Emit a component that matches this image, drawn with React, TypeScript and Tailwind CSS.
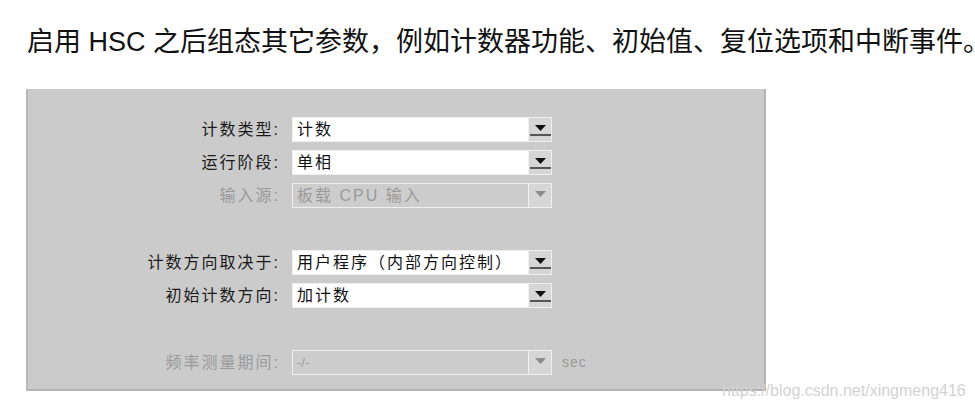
const FONT = "font-['Liberation_Sans','Noto_Sans_CJK_SC',sans-serif]";

type Row = {
  label: string;
  value: string;
  disabled?: boolean;
  unit?: string;
};

const groups: Row[][] = [
  [
    { label: "计数类型:", value: "计数" },
    { label: "运行阶段:", value: "单相" },
    { label: "输入源:", value: "板载 CPU 输入", disabled: true },
  ],
  [
    { label: "计数方向取决于:", value: "用户程序（内部方向控制）" },
    { label: "初始计数方向:", value: "加计数" },
  ],
  [{ label: "频率测量期间:", value: "-/-", disabled: true, unit: "sec" }],
];

function Arrow({ disabled }: { disabled?: boolean }) {
  return (
    <div className="flex h-full w-[23px] shrink-0 flex-col items-center justify-center border-l border-[#f2f2f2] bg-[#d6d6d6]">
      <svg width="11" height="6" viewBox="0 0 11 6" className="mt-[2px]">
        <polygon points="0,0 11,0 5.5,6" fill={disabled ? "#8c8c8c" : "#111"} />
      </svg>
      <div className={`mt-[3px] h-[2px] w-[21px] ${disabled ? "" : "bg-[#555]"}`} />
    </div>
  );
}

function Field({ row }: { row: Row }) {
  return (
    <div className="flex h-[25px] items-center">
      <div className={`w-[264px] pr-[12px] text-right text-[16px] tracking-[2px] ${row.disabled ? "text-[#9a9a9a]" : "text-[#1a1a1a]"}`}>
        {row.label}
      </div>
      <div
        className={`flex h-[25px] w-[260px] items-stretch border border-[#efefef] ${row.disabled ? "bg-[#cdcdcd]" : "bg-white"}`}
      >
        <div
          className={`flex flex-1 items-center overflow-hidden whitespace-nowrap pl-[4px] ${
            row.disabled ? "text-[#9a9a9a]" : "text-[#111]"
          } ${row.value === "-/-" ? "text-[13px]" : "text-[16px] tracking-[2px]"}`}
        >
          {row.value}
        </div>
        <Arrow disabled={row.disabled} />
      </div>
      {row.unit && <div className="ml-[10px] text-[14px] tracking-[1px] text-[#9a9a9a]">{row.unit}</div>}
    </div>
  );
}

export default function App() {
  return (
    <div className={`relative h-[409px] w-[975px] overflow-hidden bg-white ${FONT}`}>
      <p className="whitespace-nowrap pl-[27px] pt-[24px] text-[27px] leading-[36px] text-[#111]">
        启用 HSC 之后组态其它参数，例如计数器功能、初始值、复位选项和中断事件。
      </p>
      <div className="ml-[26px] mt-[29px] flex h-[302px] w-[740px] flex-col gap-[42px] border-b-2 border-l-2 border-r-2 border-b-[#b4b4b4] border-l-[#b9b9b9] border-r-[#b4b4b4] bg-[#cbcbcb] pt-[28px]">
        {groups.map((g, i) => (
          <div key={i} className="flex flex-col gap-[8px]">
            {g.map((r) => (
              <Field key={r.label} row={r} />
            ))}
          </div>
        ))}
      </div>
      <div className="absolute left-[722px] top-[379px] font-['Liberation_Sans',sans-serif] text-[16px] text-[#d2d2d2]">
        https://blog.csdn.net/xingmeng416
      </div>
    </div>
  );
}
